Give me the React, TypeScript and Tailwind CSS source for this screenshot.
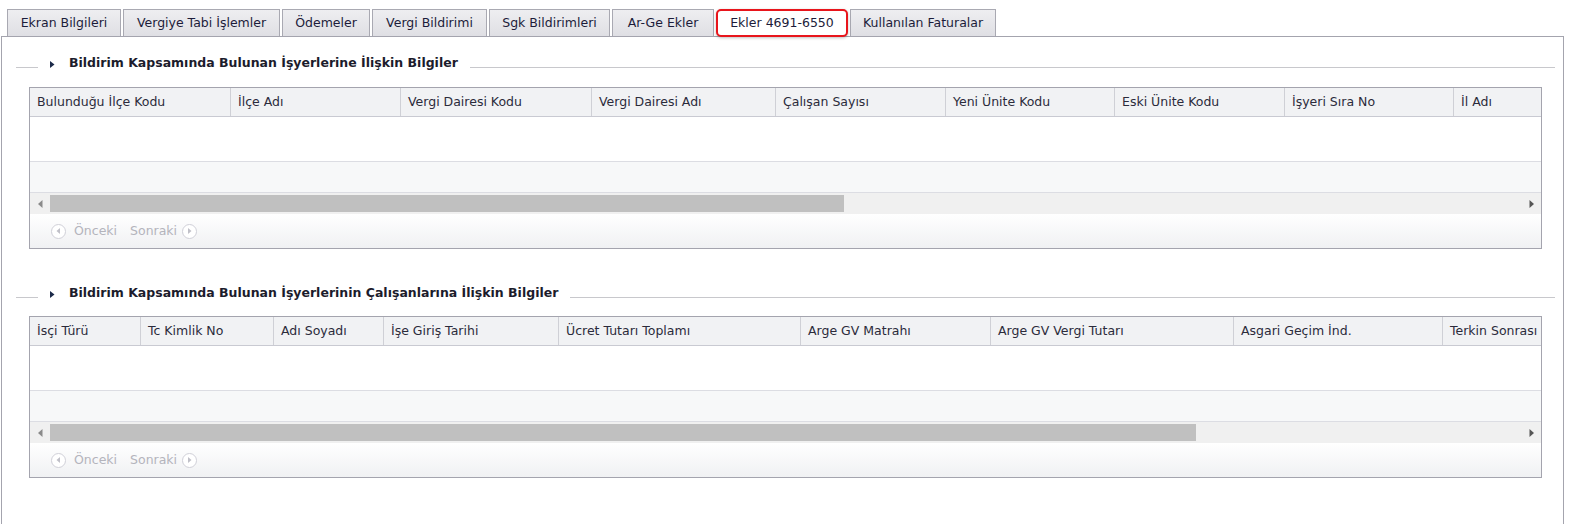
const tabs = [
  'Ekran Bilgileri',
  'Vergiye Tabi İşlemler',
  'Ödemeler',
  'Vergi Bildirimi',
  'Sgk Bildirimleri',
  'Ar-Ge Ekler',
  'Ekler 4691-6550',
  'Kullanılan Faturalar',
]
const tabWidths = [114, 157, 88, 115, 121, 102, 132, 146]
const ACTIVE = 6

const isyeriCols = [
  { label: 'Bulunduğu İlçe Kodu', w: 201 },
  { label: 'İlçe Adı', w: 170 },
  { label: 'Vergi Dairesi Kodu', w: 191 },
  { label: 'Vergi Dairesi Adı', w: 184 },
  { label: 'Çalışan Sayısı', w: 170 },
  { label: 'Yeni Ünite Kodu', w: 169 },
  { label: 'Eski Ünite Kodu', w: 170 },
  { label: 'İşyeri Sıra No', w: 169 },
  { label: 'İl Adı', w: 170 },
]

const calisanCols = [
  { label: 'İsçi Türü', w: 111 },
  { label: 'Tc Kimlik No', w: 133 },
  { label: 'Adı Soyadı', w: 110 },
  { label: 'İşe Giriş Tarihi', w: 175 },
  { label: 'Ücret Tutarı Toplamı', w: 242 },
  { label: 'Arge GV Matrahı', w: 190 },
  { label: 'Arge GV Vergi Tutarı', w: 243 },
  { label: 'Asgari Geçim İnd.', w: 209 },
  { label: 'Terkin Sonrası', w: 160 },
]

function SectionTitle({ title }: { title: string }) {
  return (
    <div className="flex items-center h-[16px] pl-[14px] pr-[8px]">
      <div className="w-[22px] h-px bg-[#c8c8cc] mt-[9px]" />
      <svg width="10" height="9" viewBox="0 0 10 9" className="ml-[9px] mt-[2px]">
        <path d="M3 1 L7.5 4.5 L3 8 Z" fill="#1c2a4a" />
      </svg>
      <span className="ml-[12px] font-bold text-[#1c1c2c] whitespace-nowrap">{title}</span>
      <div className="flex-1 h-px bg-[#c8c8cc] ml-[12px] mt-[9px]" />
    </div>
  )
}

function PagerCircle({ dir }: { dir: 'left' | 'right' }) {
  return (
    <span className="flex items-center justify-center w-[15px] h-[15px] rounded-full border border-[#d0d0d8] bg-white">
      <svg width="5" height="6" viewBox="0 0 5 6">
        {dir === 'left' ? (
          <path d="M4 0 L0.5 3 L4 6 Z" fill="#c0c0c8" />
        ) : (
          <path d="M1 0 L4.5 3 L1 6 Z" fill="#c0c0c8" />
        )}
      </svg>
    </span>
  )
}

function Grid({ cols, thumb }: { cols: { label: string; w: number }[]; thumb: number }) {
  return (
    <div className="ml-[27px] mr-[21px] border border-[#a4a4ae] overflow-hidden">
      <div className="flex h-[29px] bg-[#f1f2f4] border-b border-[#c9cad2] whitespace-nowrap">
        {cols.map((c, i) => (
          <div
            key={c.label}
            className={`flex-none flex items-center pl-[7px] text-[#2b2b3b] ${i < cols.length - 1 ? 'border-r border-[#cfd0d6]' : ''}`}
            style={{ width: c.w }}
          >
            {c.label}
          </div>
        ))}
      </div>
      <div className="h-[45px] bg-white border-b border-[#dcdde3]" />
      <div className="h-[31px] bg-[#f7f8f9] border-b border-[#dcdde3]" />
      <div className="flex items-center h-[21px] bg-[#f0f0f0]">
        <div className="w-[20px] flex justify-center">
          <svg width="5" height="8" viewBox="0 0 5 8">
            <path d="M4.5 0 L0 4 L4.5 8 Z" fill="#8a8a8a" />
          </svg>
        </div>
        <div className="flex-1 h-[17px]">
          <div className="h-full bg-[#c0c0c0]" style={{ width: thumb }} />
        </div>
        <div className="w-[20px] flex justify-center">
          <svg width="5" height="8" viewBox="0 0 5 8">
            <path d="M0.5 0 L5 4 L0.5 8 Z" fill="#555" />
          </svg>
        </div>
      </div>
      <div className="flex items-center h-[34px] bg-gradient-to-b from-white to-[#f0f1f3] pl-[21px] text-[#b4b4bc]">
        <PagerCircle dir="left" />
        <span className="ml-[8px]">Önceki</span>
        <span className="ml-[13px]">Sonraki</span>
        <span className="ml-[5px]">
          <PagerCircle dir="right" />
        </span>
      </div>
    </div>
  )
}

export default function App() {
  return (
    <div className="w-[1574px] h-[524px] bg-white overflow-hidden font-['DejaVu_Sans',Verdana,sans-serif] text-[12.5px]">
      <div className="flex gap-[2px] pl-[7px] pt-[9px] h-[36px] items-end">
        {tabs.map((t, i) =>
          i === ACTIVE ? (
            <div
              key={t}
              className="flex-none flex items-center justify-center h-[28px] rounded-[5px] border-2 border-[#e8151c] bg-white shadow-[0_1px_3px_rgba(0,0,0,0.25)] text-[#1c1c3a] relative z-10 mb-[-1px]"
              style={{ width: tabWidths[i] }}
            >
              {t}
            </div>
          ) : (
            <div
              key={t}
              className="flex-none flex items-center justify-center h-[27px] border border-b-0 border-[#a9a9b2] bg-gradient-to-b from-[#eeeef1] to-[#dfdfe4] text-[#1c1c3a]"
              style={{ width: tabWidths[i] }}
            >
              {t}
            </div>
          ),
        )}
      </div>
      <div className="ml-[1px] w-[1563px] h-[490px] border border-b-0 border-[#a4a4ae]">
        <div className="pt-[18px]">
          <SectionTitle title="Bildirim Kapsamında Bulunan İşyerlerine İlişkin Bilgiler" />
        </div>
        <div className="mt-[16px]">
          <Grid cols={isyeriCols} thumb={794} />
        </div>
        <div className="mt-[36px]">
          <SectionTitle title="Bildirim Kapsamında Bulunan İşyerlerinin Çalışanlarına İlişkin Bilgiler" />
        </div>
        <div className="mt-[15px]">
          <Grid cols={calisanCols} thumb={1146} />
        </div>
      </div>
    </div>
  )
}
